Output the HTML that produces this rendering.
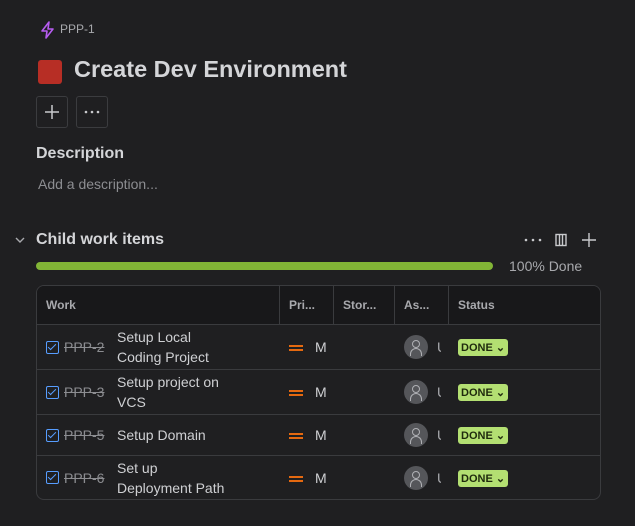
<!DOCTYPE html>
<html><head><style>
*{box-sizing:border-box;margin:0;padding:0}
body{width:635px;height:526px;background:#1f1f21;font-family:"Liberation Sans",sans-serif;color:#cfd0d3;position:relative;overflow:hidden}
.a{position:absolute}
.btn{position:absolute;width:32px;height:32px;border:1px solid #3b3c3f;border-radius:3px;top:96px}
table{position:absolute;left:36px;top:285px;width:565px;border-collapse:separate;border-spacing:0;border:1px solid #3a3b3e;border-radius:8px;overflow:hidden;font-size:14px}
td,th{border-bottom:1px solid #3a3b3e;border-right:1px solid #3a3b3e;vertical-align:middle}
th{background:#18181a;text-align:left;font-size:12px;font-weight:bold;color:#a8a9ad;height:39px;padding-left:9px}
tr td:last-child,tr th:last-child{border-right:none}
tr:last-child td{border-bottom:none}
td{padding-left:9px;border-right:none}
.cb{display:inline-block;width:13px;height:13px;border:1.5px solid #579dff;border-radius:2px;vertical-align:middle;position:relative}
.cb:after{content:"";position:absolute;left:3px;top:0px;width:3px;height:7px;border:solid #579dff;border-width:0 1.5px 1.5px 0;transform:rotate(45deg)}
.key{color:#8c8d91;text-decoration:line-through;margin-left:5px;display:inline-block;width:53px;vertical-align:middle}
.sum{display:inline-block;vertical-align:middle;width:118px;line-height:20px;color:#cfd0d3}
.pr{display:inline-block;vertical-align:middle;margin-right:12px;width:14px;height:6px;border-top:2px solid #e56910;border-bottom:2px solid #e56910}
.av{display:inline-block;width:24px;height:24px;border-radius:50%;background:#55565a;vertical-align:middle;position:relative;overflow:hidden}
.av:before{content:"";position:absolute;left:8px;top:5px;width:6px;height:6px;border:1.5px solid #b0b1b5;border-radius:50%}
.av:after{content:"";position:absolute;left:6px;top:13px;width:10px;height:7px;border:1.5px solid #b0b1b5;border-bottom:none;border-radius:6px 6px 0 0}
.u{display:inline-block;vertical-align:middle;margin-left:9px;color:#a8a9ad;width:4px;overflow:hidden}
.done{display:inline-block;background:#b3df72;color:#1f2a0d;font-size:11px;font-weight:bold;padding:2px 3px;border-radius:3px}
</style></head><body>
<svg class="a" style="left:40px;top:21px" width="16" height="18" viewBox="0 0 16 18"><path d="M9 1 L2 10 H7 L6 17 L13 8 H8 Z" fill="none" stroke="#b65cf0" stroke-width="1.6" stroke-linejoin="round"/></svg>
<div class="a" style="left:60px;top:22px;font-size:12px;color:#a8a9ad">PPP-1</div>
<div class="a" style="left:38px;top:60px;width:24px;height:24px;background:#b72e25;border-radius:3px"></div>
<div class="a" style="left:74px;top:56px;font-size:23.5px;font-weight:bold;color:#d4d5d8">Create Dev Environment</div>
<div class="btn" style="left:36px"><svg width="30" height="30"><path d="M15 8v14M8 15h14" stroke="#c9cacd" stroke-width="1.5"/></svg></div>
<div class="btn" style="left:76px"><svg width="30" height="30"><circle cx="9" cy="15" r="1.3" fill="#c9cacd"/><circle cx="15" cy="15" r="1.3" fill="#c9cacd"/><circle cx="21" cy="15" r="1.3" fill="#c9cacd"/></svg></div>
<div class="a" style="left:36px;top:145px;font-size:16px;font-weight:bold;color:#d4d5d8">Description</div>
<div class="a" style="left:38px;top:176px;font-size:14px;color:#8c8d91">Add a description...</div>
<svg class="a" style="left:13px;top:234px" width="14" height="12"><path d="M3 4l4 4 4-4" fill="none" stroke="#a8a9ad" stroke-width="1.4"/></svg>
<div class="a" style="left:36px;top:231px;font-size:16px;font-weight:bold;color:#d4d5d8">Child work items</div>
<svg class="a" style="left:522px;top:232px" width="80" height="18"><circle cx="4" cy="8" r="1.3" fill="#c9cacd"/><circle cx="11" cy="8" r="1.3" fill="#c9cacd"/><circle cx="18" cy="8" r="1.3" fill="#c9cacd"/><rect x="34" y="2.5" width="10" height="11" fill="none" stroke="#c9cacd" stroke-width="1.4"/><path d="M37.5 3v10M40.5 3v10M67 1v14M60 8h14" stroke="#c9cacd" stroke-width="1.4"/></svg>
<div class="a" style="left:36px;top:262px;width:457px;height:8px;border-radius:4px;background:#82b536"></div>
<div class="a" style="left:509px;top:258px;font-size:14px;color:#a8a9ad">100% Done</div>
<table>
<tr><th style="width:243px">Work</th><th style="width:54px">Pri...</th><th style="width:61px">Stor...</th><th style="width:54px">As...</th><th>Status</th></tr>
<tr style="height:45px"><td><span class="cb"></span><span class="key">PPP-2</span><span class="sum">Setup Local Coding Project</span></td><td><span class="pr"></span>M</td><td></td><td><span class="av"></span><span class="u">U</span></td><td><span class="done">DONE ⌄</span></td></tr>
<tr style="height:45px"><td><span class="cb"></span><span class="key">PPP-3</span><span class="sum">Setup project on VCS</span></td><td><span class="pr"></span>M</td><td></td><td><span class="av"></span><span class="u">U</span></td><td><span class="done">DONE ⌄</span></td></tr>
<tr style="height:41px"><td><span class="cb"></span><span class="key">PPP-5</span><span class="sum">Setup Domain</span></td><td><span class="pr"></span>M</td><td></td><td><span class="av"></span><span class="u">U</span></td><td><span class="done">DONE ⌄</span></td></tr>
<tr style="height:43px"><td><span class="cb"></span><span class="key">PPP-6</span><span class="sum">Set up Deployment Path</span></td><td><span class="pr"></span>M</td><td></td><td><span class="av"></span><span class="u">U</span></td><td><span class="done">DONE ⌄</span></td></tr>
</table>
</body></html>
